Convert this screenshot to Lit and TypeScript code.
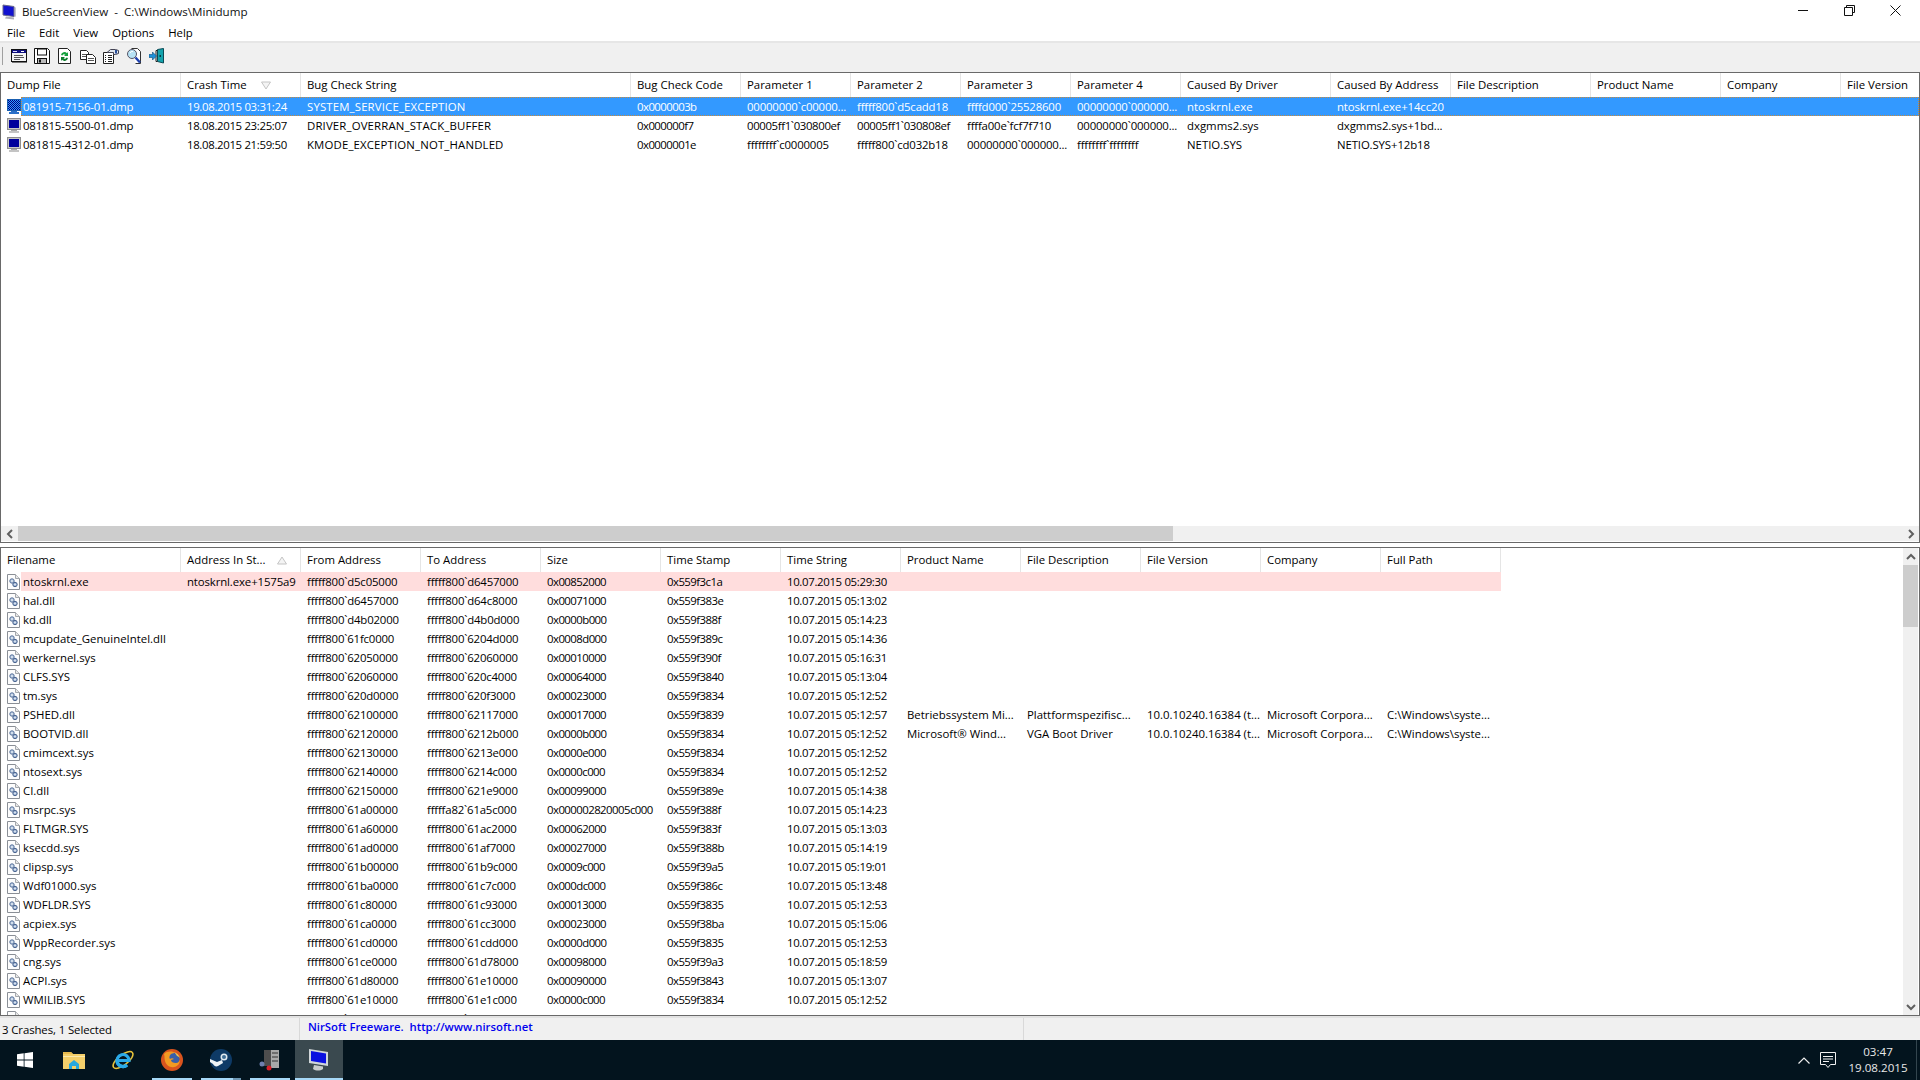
import { LitElement, html, css, svg } from 'lit';
import { customElement } from 'lit/decorators.js';

const TOP_COLS = [180, 120, 330, 110, 110, 110, 110, 110, 150, 120, 140, 130, 120, 78];
const TOP_HEAD = ['Dump File', 'Crash Time', 'Bug Check String', 'Bug Check Code', 'Parameter 1', 'Parameter 2', 'Parameter 3', 'Parameter 4', 'Caused By Driver', 'Caused By Address', 'File Description', 'Product Name', 'Company', 'File Version'];
const TOP_ROWS = [
  ['081915-7156-01.dmp', '19.08.2015 03:31:24', 'SYSTEM_SERVICE_EXCEPTION', '0x0000003b', '00000000`c00000...', 'fffff800`d5cadd18', 'ffffd000`25528600', '00000000`000000...', 'ntoskrnl.exe', 'ntoskrnl.exe+14cc20'],
  ['081815-5500-01.dmp', '18.08.2015 23:25:07', 'DRIVER_OVERRAN_STACK_BUFFER', '0x000000f7', '00005ff1`030800ef', '00005ff1`030808ef', 'ffffa00e`fcf7f710', '00000000`000000...', 'dxgmms2.sys', 'dxgmms2.sys+1bd...'],
  ['081815-4312-01.dmp', '18.08.2015 21:59:50', 'KMODE_EXCEPTION_NOT_HANDLED', '0x0000001e', 'ffffffff`c0000005', 'fffff800`cd032b18', '00000000`000000...', 'ffffffff`ffffffff', 'NETIO.SYS', 'NETIO.SYS+12b18'],
];

const BOTTOM_COLS = [180, 120, 120, 120, 120, 120, 120, 120, 120, 120, 120, 120];
const BOTTOM_HEAD = ['Filename', 'Address In St...', 'From Address', 'To Address', 'Size', 'Time Stamp', 'Time String', 'Product Name', 'File Description', 'File Version', 'Company', 'Full Path'];
const BOOTSTART = ['Betriebssystem Mi...', 'Plattformspezifisc...', '10.0.10240.16384 (t...', 'Microsoft Corpora...', 'C:\\Windows\\syste...'];
const BOOTVID = ['Microsoft\u00ae Wind...', 'VGA Boot Driver', '10.0.10240.16384 (t...', 'Microsoft Corpora...', 'C:\\Windows\\syste...'];
const BOTTOM_ROWS = [
  ['ntoskrnl.exe', 'ntoskrnl.exe+1575a9', 'fffff800`d5c05000', 'fffff800`d6457000', '0x00852000', '0x559f3c1a', '10.07.2015 05:29:30'],
  ['hal.dll', '', 'fffff800`d6457000', 'fffff800`d64c8000', '0x00071000', '0x559f383e', '10.07.2015 05:13:02'],
  ['kd.dll', '', 'fffff800`d4b02000', 'fffff800`d4b0d000', '0x0000b000', '0x559f388f', '10.07.2015 05:14:23'],
  ['mcupdate_GenuineIntel.dll', '', 'fffff800`61fc0000', 'fffff800`6204d000', '0x0008d000', '0x559f389c', '10.07.2015 05:14:36'],
  ['werkernel.sys', '', 'fffff800`62050000', 'fffff800`62060000', '0x00010000', '0x559f390f', '10.07.2015 05:16:31'],
  ['CLFS.SYS', '', 'fffff800`62060000', 'fffff800`620c4000', '0x00064000', '0x559f3840', '10.07.2015 05:13:04'],
  ['tm.sys', '', 'fffff800`620d0000', 'fffff800`620f3000', '0x00023000', '0x559f3834', '10.07.2015 05:12:52'],
  ['PSHED.dll', '', 'fffff800`62100000', 'fffff800`62117000', '0x00017000', '0x559f3839', '10.07.2015 05:12:57', ...BOOTSTART],
  ['BOOTVID.dll', '', 'fffff800`62120000', 'fffff800`6212b000', '0x0000b000', '0x559f3834', '10.07.2015 05:12:52', ...BOOTVID],
  ['cmimcext.sys', '', 'fffff800`62130000', 'fffff800`6213e000', '0x0000e000', '0x559f3834', '10.07.2015 05:12:52'],
  ['ntosext.sys', '', 'fffff800`62140000', 'fffff800`6214c000', '0x0000c000', '0x559f3834', '10.07.2015 05:12:52'],
  ['CI.dll', '', 'fffff800`62150000', 'fffff800`621e9000', '0x00099000', '0x559f389e', '10.07.2015 05:14:38'],
  ['msrpc.sys', '', 'fffff800`61a00000', 'fffffa82`61a5c000', '0x000002820005c000', '0x559f388f', '10.07.2015 05:14:23'],
  ['FLTMGR.SYS', '', 'fffff800`61a60000', 'fffff800`61ac2000', '0x00062000', '0x559f383f', '10.07.2015 05:13:03'],
  ['ksecdd.sys', '', 'fffff800`61ad0000', 'fffff800`61af7000', '0x00027000', '0x559f388b', '10.07.2015 05:14:19'],
  ['clipsp.sys', '', 'fffff800`61b00000', 'fffff800`61b9c000', '0x0009c000', '0x559f39a5', '10.07.2015 05:19:01'],
  ['Wdf01000.sys', '', 'fffff800`61ba0000', 'fffff800`61c7c000', '0x000dc000', '0x559f386c', '10.07.2015 05:13:48'],
  ['WDFLDR.SYS', '', 'fffff800`61c80000', 'fffff800`61c93000', '0x00013000', '0x559f3835', '10.07.2015 05:12:53'],
  ['acpiex.sys', '', 'fffff800`61ca0000', 'fffff800`61cc3000', '0x00023000', '0x559f38ba', '10.07.2015 05:15:06'],
  ['WppRecorder.sys', '', 'fffff800`61cd0000', 'fffff800`61cdd000', '0x0000d000', '0x559f3835', '10.07.2015 05:12:53'],
  ['cng.sys', '', 'fffff800`61ce0000', 'fffff800`61d78000', '0x00098000', '0x559f39a3', '10.07.2015 05:18:59'],
  ['ACPI.sys', '', 'fffff800`61d80000', 'fffff800`61e10000', '0x00090000', '0x559f3843', '10.07.2015 05:13:07'],
  ['WMILIB.SYS', '', 'fffff800`61e10000', 'fffff800`61e1c000', '0x0000c000', '0x559f3834', '10.07.2015 05:12:52'],
  ['WindowsTrustedRT.sys', '', 'fffff800`61e20000', 'fffff800`61e34000', '0x00014000', '0x559f386a', '10.07.2015 05:13:46'],
];

// the reference font has narrower digits than Open Sans, so tighten by kind of value
function tracking(text: string): number {
  if (text.startsWith('0x')) return -0.55;
  if (/^\d\d\.\d\d\.\d{4} /.test(text)) return -0.33;
  if (text.includes('`')) {
    const digits = text.replace(/\D/g, '').length;
    return digits >= 12 && !text.endsWith('...') ? -0.36 : -0.18;
  }
  if (text.includes('+')) return -0.12;
  if (/^\d+-\d+-\d+/.test(text)) return -0.14;
  if (/^[A-Z_]+$/.test(text)) return 0.15;
  return 0;
}

const monitorIcon = (selected = false) => html`
  <svg class="row-svg" width="14" height="16" viewBox="0 0 14 16">
    <defs>
      <pattern id="dither" width="2" height="2" patternUnits="userSpaceOnUse">
        <rect width="2" height="2" fill="#3399ff"></rect>
        <rect width="1" height="1" fill="#000080"></rect>
        <rect x="1" y="1" width="1" height="1" fill="#000080"></rect>
      </pattern>
    </defs>
    <rect x="0.5" y="0.5" width="13" height="11" fill="${selected ? 'url(#dither)' : '#c8c8c8'}" stroke="${selected ? '#1a5fb0' : '#8e8e8e'}"></rect>
    <rect x="2" y="2" width="10" height="8" fill="${selected ? 'url(#dither)' : '#00009c'}"></rect>
    <rect x="4" y="12" width="6" height="1" fill="${selected ? '#2a70c8' : '#a8a8a8'}"></rect>
    <rect x="2" y="13" width="10" height="2" fill="${selected ? '#2a70c8' : '#c4c4c4'}"></rect>
  </svg>`;

const fileIcon = html`
  <svg class="row-svg" width="13" height="16" viewBox="0 0 13 16">
    <path d="M.5.5h8l4 4v11H.5z" fill="#fdfdfd" stroke="#8a8f96"></path>
    <path d="M8.5.5v4h4" fill="#e8e8e8" stroke="#a4a8ad"></path>
    <circle cx="5" cy="7" r="2.2" fill="#b9cbe2" stroke="#56709a"></circle>
    <circle cx="8" cy="10.5" r="2.2" fill="#9fb6d4" stroke="#4a6490"></circle>
    <circle cx="5" cy="7" r=".7" fill="#fff"></circle>
    <circle cx="8" cy="10.5" r=".7" fill="#fff"></circle>
  </svg>`;

const toolIcons = [
  svg`<rect x=".5" y="1.5" width="15" height="12" fill="#f4f4f4" stroke="#111"></rect><rect x="1" y="2" width="14" height="3" fill="#101080"></rect><rect x="2" y="3" width="4" height="1" fill="#d8d8ff"></rect><rect x="10" y="3" width="3" height="1" fill="#fff"></rect><path d="M3 7.5h9M3 9.5h10M3 11.5h6" stroke="#555"></path><path d="M1 14.5h15" stroke="#777"></path>`,
  svg`<path d="M.5.5h13l2 2v13H.5z" fill="#fff" stroke="#111"></path><rect x="3.5" y="1" width="9" height="6" fill="#fff" stroke="#111"></rect><rect x="3.5" y="10.5" width="9" height="5" fill="#bbb" stroke="#111"></rect><rect x="5" y="11.5" width="2" height="3" fill="#111"></rect>`,
  svg`<path d="M1.5.5h9l3 3v12h-12z" fill="#fff" stroke="#222"></path><path d="M4 7a3.5 3.5 0 0 1 6-1.8L11 4v4H7l1.4-1.2A2 2 0 0 0 5.400 7.500z" fill="#14a03c"></path><path d="M11 10a3.500 3.500 0 0 1-6 1.800L4 13V9h4l-1.400 1.200A2 2 0 0 0 9.600 9.500z" fill="#0d7d2e"></path>`,
  svg`<path d="M.5 2.500h6l2 2v7h-8z" fill="#fff" stroke="#222"></path><path d="M2 6.500h5M2 8.500h5" stroke="#555"></path><path d="M6.500 6.500h6l3 3v6h-9z" fill="#fff" stroke="#222"></path><path d="M8 10.500h6M8 12.500h6" stroke="#555"></path>`,
  svg`<path d="M.5 4.500h10v11H.5z" fill="#fff" stroke="#222"></path><path d="M2 7.500h1M5 7.500h4M2 9.500h1M5 9.500h4M2 11.500h1M5 11.500h4M2 13.500h1M5 13.500h4" stroke="#222"></path><path d="M4 4.500L7.500 1.500h5l3 1v3l-3 1h-2V4.500z" fill="#dfe6ee" stroke="#445"></path><path d="M13 2v3.500" stroke="#2b4f9a" stroke-width="2"></path>`,
  svg`<path d="M5.500.5h6l3 3v12h-5" fill="#fff" stroke="#333"></path><circle cx="6" cy="6" r="4.500" fill="#b7e2f5" stroke="#556"></circle><path d="M4 5a2.500 2.500 0 0 1 3-1.500" stroke="#fff" fill="none"></path><path d="M9.500 9.500l4.500 5" stroke="#1d3fae" stroke-width="2.400"></path>`,
  svg`<path d="M8.500 1.500l6-1v14.500l-6-1.500z" fill="#13a3ad" stroke="#0b4a55"></path><path d="M8.500 2.500H7v11h1.500" fill="none" stroke="#222"></path><rect x="10.500" y="7" width="1.500" height="2" fill="#073a42"></rect><path d="M0 6.500h3.500V4l4 4-4 4V9.500H0z" fill="#1e90d8" stroke="#0b4b7c" stroke-width=".6"></path>`,
];

@customElement('app-root')
export class AppRoot extends LitElement {
  static styles = css`
    :host {
      display: flex;
      flex-direction: column;
      width: 1920px;
      height: 1080px;
      overflow: hidden;
      background: #fff;
      color: #000;
      font-family: "Open Sans", "Noto Sans", sans-serif;
      font-size: 11.4px;
      line-height: 16px;
      white-space: nowrap;
    }

    .titlebar {
      display: flex;
      align-items: center;
      height: 22px;
      flex: none;
      padding: 1px 2px 0 2px;
      box-sizing: border-box;
    }

    .titlebar .title {
      margin-left: 6px;
      flex: 1;
      color: #111;
      font-size: 11.6px;
      white-space: pre;
    }

    .winbtn {
      width: 46px;
      display: flex;
      justify-content: center;
      margin-top: -3px;
    }

    .menubar {
      display: flex;
      align-items: center;
      height: 21px;
      flex: none;
      box-sizing: border-box;
      padding-top: 2px;
      border-bottom: 2px solid #e6e6e6;
    }

    .menubar span {
      padding: 0 7px;
    }

    .toolbar {
      display: flex;
      align-items: center;
      height: 29px;
      flex: none;
      box-sizing: border-box;
      padding: 0 0 3px 2px;
      background: #f0f0f0;
    }

    .grip {
      width: 1px;
      height: 18px;
      background: #a0a0a0;
      margin-right: 8px;
    }

    .toolbar svg {
      margin-right: 7px;
    }

    .list {
      display: flex;
      flex-direction: column;
      flex: none;
      overflow: hidden;
      border: 1px solid #696969;
      box-sizing: border-box;
    }

    .list.top {
      height: 471px;
    }

    .list.bottom {
      height: 469px;
      flex-direction: row;
      margin-top: 4px;
    }

    .list-main {
      flex: 1;
      min-width: 0;
      display: flex;
      flex-direction: column;
      overflow: hidden;
    }

    .head {
      display: flex;
      height: 24px;
      flex: none;
    }

    .head .cell {
      box-sizing: border-box;
      height: 24px;
      line-height: 24px;
      padding-left: 6px;
      border-right: 1px solid #e5e5e5;
      position: relative;
      flex: none;
      overflow: hidden;
    }

    .head .cell:last-child {
      border-right: 0;
    }

    .bottom .head .cell:last-child {
      border-right: 1px solid #e5e5e5;
    }

    .sort {
      position: absolute;
      top: 8px;
    }

    .rows {
      flex: 1;
      overflow: hidden;
    }

    .row {
      display: flex;
      height: 19px;
    }

    .row-icon {
      width: 20px;
      flex: none;
      display: flex;
      align-items: center;
      padding-left: 6px;
      box-sizing: border-box;
    }

    .fill {
      display: flex;
      flex: none;
      box-sizing: border-box;
    }

    .row .cell {
      box-sizing: border-box;
      padding-left: 6px;
      line-height: 19px;
      overflow: hidden;
      flex: none;
    }

    .row .cell.first {
      padding-left: 2px;
    }

    .row.selected .fill {
      background: #3399ff;
      color: #fff;
      outline: 1px dotted #c98a3c;
      outline-offset: -1px;
    }

    .row.crash .fill {
      background: #ffdddd;
    }

    .hscroll {
      display: flex;
      height: 15px;
      flex: none;
      margin-bottom: 1px;
      background: #f0f0f0;
    }

    .hbtn {
      width: 17px;
      flex: none;
      display: flex;
      align-items: center;
      justify-content: center;
    }

    .hthumb {
      width: 1155px;
      flex: none;
      background: #cdcdcd;
    }

    .hrest {
      flex: 1;
    }

    .vscroll {
      display: flex;
      flex-direction: column;
      width: 15px;
      flex: none;
      margin-right: 1px;
      background: #f0f0f0;
    }

    .vbtn {
      height: 17px;
      flex: none;
      display: flex;
      align-items: center;
      justify-content: center;
    }

    .vthumb {
      height: 62px;
      flex: none;
      background: #cdcdcd;
    }

    .vrest {
      flex: 1;
    }

    .status {
      display: flex;
      height: 24px;
      flex: none;
      box-sizing: border-box;
      background: #f0f0f0;
      border-top: 2px solid #e2e2e2;
    }

    .status div {
      box-sizing: border-box;
      border-right: 1px solid #d9d9d9;
    }

    .status .count {
      width: 300px;
      padding: 4px 0 0 2px;
      letter-spacing: -0.1px;
    }

    .status .link {
      width: 724px;
      padding: 1px 0 0 8px;
      color: #0000ee;
      font-weight: 600;
      font-size: 11.3px;
      white-space: pre;
    }

    .taskbar {
      display: flex;
      align-items: stretch;
      height: 40px;
      flex: none;
      background: #03141e;
      color: #e8e8e8;
    }

    .task {
      width: 49px;
      flex: none;
      display: flex;
      align-items: center;
      justify-content: center;
      position: relative;
    }

    .task.active {
      background: linear-gradient(to right, transparent 1px, #3a494f 1px);
    }

    .task.active svg {
      margin-right: 2px;
    }

    .task.running::after {
      content: '';
      position: absolute;
      left: 5px;
      right: 4px;
      bottom: 0;
      height: 2px;
      background: #a6d8f7;
    }

    .task.stacked::after {
      background: linear-gradient(to right, #a6d8f7 32px, #6f98b4 32px);
    }

    .task.active::after {
      content: '';
      position: absolute;
      left: 1px;
      right: 0;
      bottom: 0;
      height: 2px;
      background: #a6d8f7;
    }

    .tray {
      margin-left: auto;
      display: flex;
      align-items: center;
    }

    .tray svg.chev {
      margin-right: 10px;
    }

    .clock {
      width: 76px;
      margin-left: 4px;
      text-align: center;
      line-height: 16px;
      font-size: 11.6px;
    }

    .desk {
      width: 4px;
      height: 100%;
      box-sizing: border-box;
      border-left: 1px solid #33454e;
    }
  `;

  renderList(cols: number[], heads: string[], rows: string[][], rowClass: (i: number) => string, icon: (i: number) => unknown, sort: { col: number; left: number; up: boolean }) {
    const total = cols.reduce((a, b) => a + b, 0);
    return html`
      <div class="head">
        ${heads.map((h, i) => html`
          <div class="cell" style="width:${cols[i]}px">${h}${i === sort.col ? html`
            <svg class="sort" style="left:${sort.left}px" width="10" height="9" viewBox="0 0 10 9">
              <path d="${sort.up ? 'M5 1L9.500 8H.5z' : 'M.5 1h9L5 8z'}" fill="#f4f4f4" stroke="#c4c4c4"></path>
            </svg>` : ''}</div>
        `)}
      </div>
      <div class="rows">
        ${rows.map((row, r) => html`
          <div class="row ${rowClass(r)}">
            <div class="row-icon">${icon(r)}</div>
            <div class="fill" style="width:${total - 20}px">
              ${cols.map((w, c) => html`
                <div class="cell ${c === 0 ? 'first' : ''}" style="width:${c === 0 ? w - 20 : w}px;letter-spacing:${tracking(row[c] ?? '')}px">${row[c] ?? ''}</div>
              `)}
            </div>
          </div>
        `)}
      </div>
    `;
  }

  render() {
    return html`
      <div class="titlebar">
        <svg width="14" height="16" viewBox="0 0 14 16">
          <path d="M1 1l11 1.500v10L1 11z" fill="#1212d0" stroke="#6a6a88"></path>
          <path d="M12.500 3l1 .5v9l-1 .5z" fill="#8a8aa8"></path>
          <path d="M4 12.500l8 1v2l-9-1z" fill="#b0b0b8"></path>
        </svg>
        <div class="title">BlueScreenView  -  C:\\Windows\\Minidump</div>
        <div class="winbtn"><svg width="11" height="11" viewBox="0 0 11 11"><path d="M0 5.500h10" stroke="#111"></path></svg></div>
        <div class="winbtn"><svg width="11" height="11" viewBox="0 0 11 11"><path d="M2.500 2.500V.5h8v7h-2M.5 2.500h8v8h-8z" fill="none" stroke="#111"></path></svg></div>
        <div class="winbtn"><svg width="11" height="11" viewBox="0 0 11 11"><path d="M.5.5l10 10M10.500.5l-10 10" stroke="#111"></path></svg></div>
      </div>
      <div class="menubar">
        ${['File', 'Edit', 'View', 'Options', 'Help'].map((m) => html`<span>${m}</span>`)}
      </div>
      <div class="toolbar">
        <div class="grip"></div>
        ${toolIcons.map((i) => html`<svg width="16" height="16" viewBox="0 0 16 16">${i}</svg>`)}
      </div>
      <div class="list top">
        ${this.renderList(TOP_COLS, TOP_HEAD, TOP_ROWS, (i) => (i === 0 ? 'selected' : ''), (i) => monitorIcon(i === 0), { col: 1, left: 80, up: false })}
        <div class="hscroll">
          <div class="hbtn"><svg width="8" height="10" viewBox="0 0 8 10"><path d="M6 1L2 5l4 4" fill="none" stroke="#606060" stroke-width="2"></path></svg></div>
          <div class="hthumb"></div>
          <div class="hrest"></div>
          <div class="hbtn"><svg width="8" height="10" viewBox="0 0 8 10"><path d="M2 1l4 4-4 4" fill="none" stroke="#606060" stroke-width="2"></path></svg></div>
        </div>
      </div>
      <div class="list bottom">
        <div class="list-main">
          ${this.renderList(BOTTOM_COLS, BOTTOM_HEAD, BOTTOM_ROWS, (i) => (i === 0 ? 'crash' : ''), () => fileIcon, { col: 1, left: 96, up: true })}
        </div>
        <div class="vscroll">
          <div class="vbtn"><svg width="10" height="8" viewBox="0 0 10 8"><path d="M1 6l4-4 4 4" fill="none" stroke="#606060" stroke-width="2"></path></svg></div>
          <div class="vthumb"></div>
          <div class="vrest"></div>
          <div class="vbtn"><svg width="10" height="8" viewBox="0 0 10 8"><path d="M1 2l4 4 4-4" fill="none" stroke="#606060" stroke-width="2"></path></svg></div>
        </div>
      </div>
      <div class="status">
        <div class="count">3 Crashes, 1 Selected</div>
        <div class="link">NirSoft Freeware.  http://www.nirsoft.net</div>
      </div>
      <div class="taskbar">
        <div class="task">
          <svg width="16" height="16" viewBox="0 0 16 16">
            <path d="M0 2.200l6.700-.9v6.300H0zM7.500 1.200L16 0v7.600H7.500zM0 8.400h6.700v6.300L0 13.800zM7.500 8.400H16V16l-8.500-1.200z" fill="#fff"></path>
          </svg>
        </div>
        <div class="task">
          <svg width="22" height="18" viewBox="0 0 22 18">
            <path d="M0 1h8l2 2h12v15H0z" fill="#f4cf6a"></path>
            <path d="M0 1h8l2 2H0z" fill="#e6b94e"></path>
            <rect y="5" width="22" height="1" fill="#fbe9ad"></rect>
            <path d="M6 13l5-4 5 4v5h-3v-3H9v3H6z" fill="#29a8e0"></path>
          </svg>
        </div>
        <div class="task">
          <svg width="24" height="24" viewBox="0 0 24 24">
            <ellipse cx="12" cy="12" rx="12" ry="5" transform="rotate(-38 12 12)" fill="none" stroke="#e8c33a" stroke-width="1.500"></ellipse>
            <path d="M6.500 12.500h11.500a6 6 0 1 0-2 4.500" fill="none" stroke="#2aa9e8" stroke-width="3.200"></path>
            <path d="M6 12.500a6 6 0 0 0 10 4.500" fill="none" stroke="#2aa9e8" stroke-width="3.200"></path>
          </svg>
        </div>
        <div class="task running">
          <svg width="22" height="22" viewBox="0 0 22 22">
            <circle cx="11" cy="11" r="11" fill="#d9541e"></circle>
            <circle cx="12" cy="10" r="6.500" fill="#3a5fa8"></circle>
            <path d="M3 5c1 3 0 4 1 7 1 4 5 7 9 6 4-.5 6-4 6-7-1 2-2 3-4 3-3 0-5-1-5-3l3-1c-1-1-3-1-4 0-1-1-1-3 1-5 2-1 3-1 4-1-3-2-8-2-11 1z" fill="#f29a22"></path>
            <path d="M13 3c3 1 5 3 6 6-1-1-2-2-3-2-1-2-2-3-3-4z" fill="#f6c445"></path>
          </svg>
        </div>
        <div class="task running stacked">
          <svg width="22" height="22" viewBox="0 0 22 22">
            <circle cx="11" cy="11" r="11" fill="#0e3a66"></circle>
            <circle cx="14" cy="8" r="3.500" fill="#dfe8f0"></circle>
            <circle cx="14" cy="8" r="2" fill="#3e6d96"></circle>
            <path d="M0 10l7 3 5-2 1 3-5 3c-2 1-4 0-5-2L0 13z" fill="#eef3f7"></path>
          </svg>
        </div>
        <div class="task running">
          <svg width="22" height="22" viewBox="0 0 22 22">
            <rect x="5" y="1" width="7" height="16" fill="#4d4d4d"></rect>
            <rect x="12" y="1" width="8" height="18" fill="#a8a8a8"></rect>
            <path d="M13 4h6M13 8h6M13 12h6" stroke="#333"></path>
            <circle cx="3" cy="15" r="2.500" fill="#6d7fb0"></circle>
            <circle cx="10" cy="19" r="2.500" fill="#d8202a"></circle>
          </svg>
        </div>
        <div class="task active">
          <svg width="22" height="24" viewBox="0 0 22 24">
            <path d="M2 1l19 3v14L2 15z" fill="#d0d6d8"></path>
            <path d="M4 3l15 2.500v10L4 13z" fill="#0a10e0"></path>
            <path d="M7 17l9 1.500v2.500c-3 2-7 2-10 0z" fill="#c8cccc"></path>
          </svg>
        </div>
        <div class="tray">
          <svg class="chev" width="12" height="7" viewBox="0 0 12 7"><path d="M.5 6.500L6 1l5.500 5.500" fill="none" stroke="#eee" stroke-width="1.200"></path></svg>
          <svg width="16" height="17" viewBox="0 0 16 17"><path d="M.5.500h15v12h-5l-2.500 3-2.500-3h-5z" fill="none" stroke="#f2f2f2"></path><path d="M3 4.500h10M3 7h10M3 9.500h6" stroke="#f2f2f2"></path></svg>
          <div class="clock">03:47<br />19.08.2015</div>
          <div class="desk"></div>
        </div>
      </div>
    `;
  }
}

declare global {
  interface HTMLElementTagNameMap {
    'app-root': AppRoot;
  }
}
